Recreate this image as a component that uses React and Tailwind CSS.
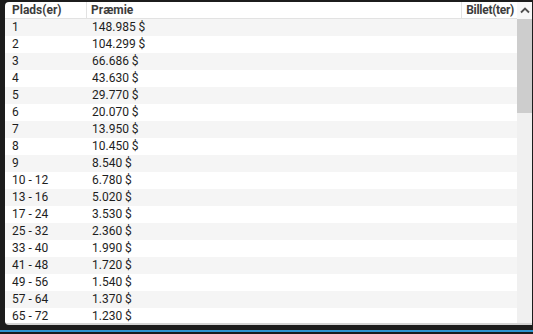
import React from "react";

const rows = [
    ["1", "148.985 $"],
    ["2", "104.299 $"],
    ["3", "66.686 $"],
    ["4", "43.630 $"],
    ["5", "29.770 $"],
    ["6", "20.070 $"],
    ["7", "13.950 $"],
    ["8", "10.450 $"],
    ["9", "8.540 $"],
    ["10 - 12", "6.780 $"],
    ["13 - 16", "5.020 $"],
    ["17 - 24", "3.530 $"],
    ["25 - 32", "2.360 $"],
    ["33 - 40", "1.990 $"],
    ["41 - 48", "1.720 $"],
    ["49 - 56", "1.540 $"],
    ["57 - 64", "1.370 $"],
    ["65 - 72", "1.230 $"],
];

export default function App() {
    return (
        <div
            className="w-[533px] h-[334px] bg-[#1c1c1c] flex flex-col overflow-hidden text-[12px] text-[#1e1e1e]"
            style={{ fontFamily: "Roboto, 'Liberation Sans', sans-serif" }}
        >
            <div className="h-[323px] mt-[2px] ml-[5px] mr-[1px] bg-white rounded-l-[4px] border-b-2 border-[#d4d4d4] flex overflow-hidden">
                {/* Table */}
                <div className="flex-1 flex flex-col overflow-hidden">
                    <div className="h-[17px] shrink-0 flex font-bold text-[#3c3c3c] border-b border-[#e2e2e2] leading-[17px]">
                        <div className="w-[82px] pl-[7px] border-r border-[#e2e2e2]">Plads(er)</div>
                        <div className="flex-1 pl-[4px] border-r border-[#e2e2e2]">Præmie</div>
                        <div className="w-[55px] text-right pr-[3px] tracking-[-0.3px]">Billet(ter)</div>
                    </div>
                    {rows.map(([place, prize], i) => (
                        <div
                            key={place}
                            className={
                                "h-[17px] shrink-0 flex leading-[17px] " +
                                (i % 2 === 0 ? "bg-[#f5f5f5]" : "bg-white")
                            }
                        >
                            <div className="w-[82px] pl-[7px]">{place}</div>
                            <div className="flex-1 pl-[5px]">{prize}</div>
                            <div className="w-[55px]"></div>
                        </div>
                    ))}
                </div>

                {/* Scrollbar */}
                <div className="w-[15px] shrink-0 bg-[#f0f0f0] flex flex-col">
                    <div className="h-[17px] bg-[#f7f7f7] flex items-center justify-center">
                        <svg width="10" height="7" viewBox="0 0 10 7">
                            <path d="M1 5.5 L5 1.5 L9 5.5" fill="none" stroke="#505050" strokeWidth="1.8" />
                        </svg>
                    </div>
                    <div className="h-[94px] bg-[#cdcdcd]"></div>
                </div>
            </div>
            <div className="h-[5px] shrink-0"></div>
            <div className="h-[2px] shrink-0 bg-[#2f93cf]"></div>
        </div>
    );
}
